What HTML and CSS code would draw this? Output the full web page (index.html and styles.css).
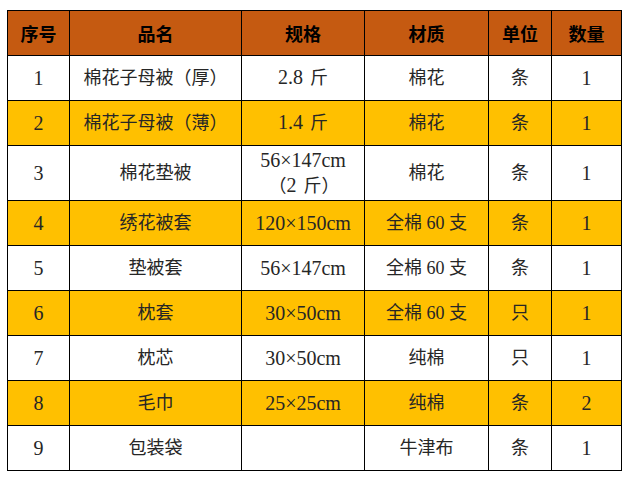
FILE: index.html
```html
<!DOCTYPE html>
<html lang="zh-CN">
<head>
<meta charset="utf-8">
<title>物品清单</title>
<link rel="stylesheet" href="styles.css">
</head>
<body>
<div class="page">
<table class="list">
  <colgroup>
    <col class="c-no"><col class="c-name"><col class="c-spec"><col class="c-mat"><col class="c-unit"><col class="c-qty">
  </colgroup>
  <thead>
    <tr class="head"><th>序号</th><th>品名</th><th>规格</th><th>材质</th><th>单位</th><th>数量</th></tr>
  </thead>
  <tbody>
    <tr><td>1</td><td>棉花子母被（厚）</td><td>2.8 <span class="zh">斤</span></td><td>棉花</td><td>条</td><td>1</td></tr>
    <tr class="alt"><td>2</td><td>棉花子母被（薄）</td><td>1.4 <span class="zh">斤</span></td><td>棉花</td><td>条</td><td>1</td></tr>
    <tr class="tall"><td>3</td><td>棉花垫被</td><td>56×147cm<br><span class="zh">（</span>2 <span class="zh">斤）</span></td><td>棉花</td><td>条</td><td>1</td></tr>
    <tr class="alt"><td>4</td><td>绣花被套</td><td>120×150cm</td><td>全棉 60 支</td><td>条</td><td>1</td></tr>
    <tr><td>5</td><td>垫被套</td><td>56×147cm</td><td>全棉 60 支</td><td>条</td><td>1</td></tr>
    <tr class="alt"><td>6</td><td>枕套</td><td>30×50cm</td><td>全棉 60 支</td><td>只</td><td>1</td></tr>
    <tr><td>7</td><td>枕芯</td><td>30×50cm</td><td>纯棉</td><td>只</td><td>1</td></tr>
    <tr class="alt"><td>8</td><td>毛巾</td><td>25×25cm</td><td>纯棉</td><td>条</td><td>2</td></tr>
    <tr><td>9</td><td>包装袋</td><td></td><td>牛津布</td><td>条</td><td>1</td></tr>
  </tbody>
</table>
</div>
</body>
</html>
```
FILE: styles.css
```css
html, body {
  margin: 0;
  padding: 0;
  background: #ffffff;
}
.page {
  padding: 10px 0 0 7px;
}
.list {
  border-collapse: collapse;
  table-layout: fixed;
  width: 614px;
  font-family: "Liberation Serif", "Noto Sans CJK SC", serif;
  font-size: 18px;
  color: #262626;
}
.c-no { width: 62px; }
.c-name { width: 172px; }
.c-spec { width: 123px; }
.c-mat { width: 124px; }
.c-unit { width: 63px; }
.c-qty { width: 70px; }
.list th, .list td {
  border: 1px solid #000;
  text-align: center;
  vertical-align: middle;
  padding: 0;
  height: 44px;
  line-height: 25px;
}
.list td:nth-child(1),
.list td:nth-child(3),
.list td:nth-child(6) {
  font-size: 20px;
}
.list td .zh {
  font-size: 18px;
  padding-left: 2px;
}
.list th {
  background: #c55a11;
  color: #000;
  font-family: "Noto Sans CJK SC", serif;
  font-weight: 700;
  font-size: 18px;
}
.list tr.alt td {
  background: #ffc000;
}
.list tr.tall td {
  height: 54px;
}
```
